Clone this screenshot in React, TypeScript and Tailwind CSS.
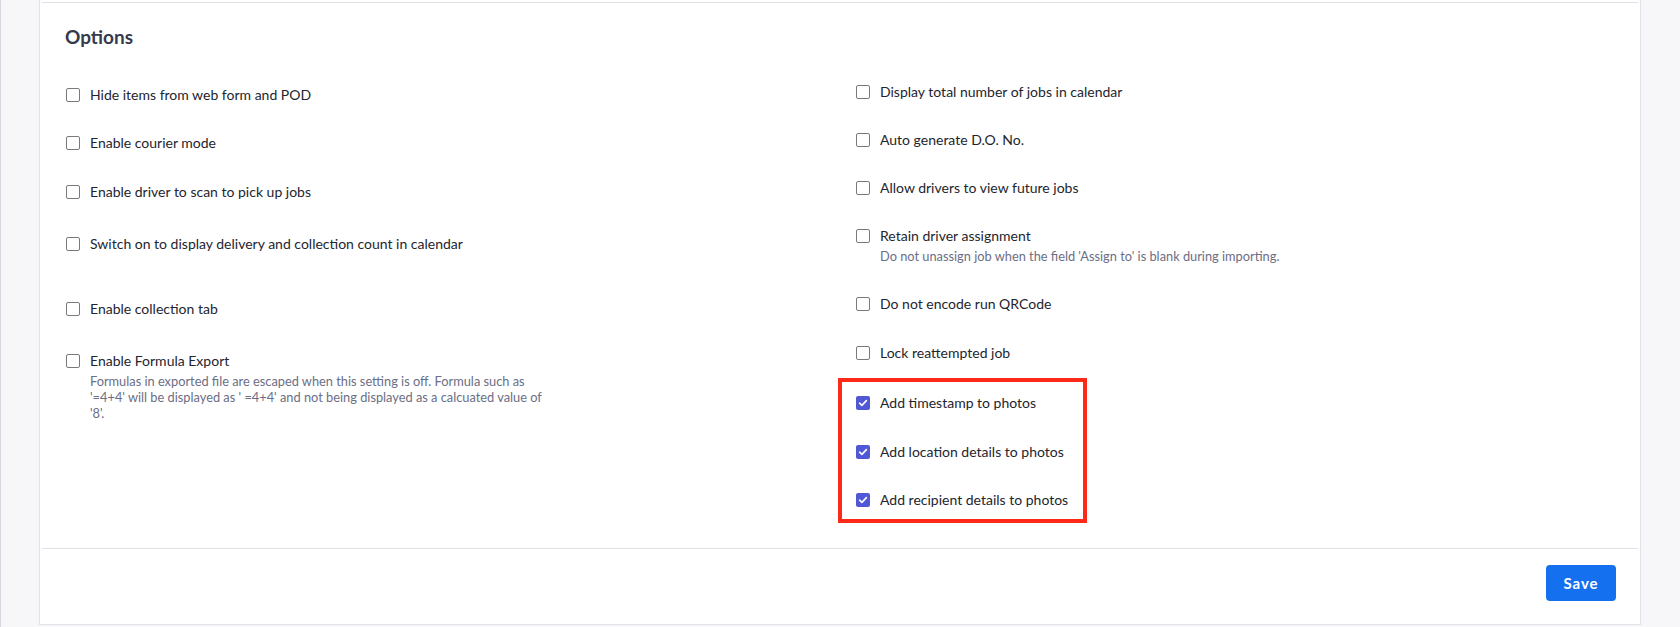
import React from "react";

const font = { fontFamily: "Lato, 'Noto Sans', sans-serif" };

function Box({ checked }: { checked?: boolean }) {
  if (checked) {
    return (
      <span className="mt-[3px] flex h-[14px] w-[14px] shrink-0 items-center justify-center rounded-[2px] bg-[#5058d6]">
        <svg width="10" height="10" viewBox="0 0 10 10" fill="none">
          <path d="M1.6 5.2 L3.9 7.4 L8.4 2.6" stroke="white" strokeWidth="1.6" strokeLinecap="round" strokeLinejoin="round" />
        </svg>
      </span>
    );
  }
  return <span className="mt-[3px] block h-[14px] w-[14px] shrink-0 rounded-[2px] border-[1.5px] border-[#7a7a7e] bg-white" />;
}

function Item({
  label,
  desc,
  checked,
  className = "",
}: {
  label: string;
  desc?: React.ReactNode;
  checked?: boolean;
  className?: string;
}) {
  return (
    <div className={"flex items-start gap-[10px] " + className}>
      <Box checked={checked} />
      <div className="flex flex-col">
        <span className="text-[14px] leading-5 text-[#23252e]">{label}</span>
        {desc && <span className="mt-[2px] text-[12.8px] leading-4 text-[#6b6e84]">{desc}</span>}
      </div>
    </div>
  );
}

export default function App() {
  return (
    <div className="flex h-[627px] w-full border-l border-[#d6d6de] bg-[#f7f7f9]" style={font}>
      <div className="ml-[38px] flex h-[625px] w-[1602px] shrink-0 flex-col border-x border-b border-[#e2e2ea] bg-white">
        <div className="h-[2px]" />
        <div className="mx-[2px] h-px bg-[#dfdfe4]" />
        <div className="h-[545px]">
          <h2 className="ml-[25px] mt-[22px] text-[19px] font-bold leading-6 text-[#363a4d]">Options</h2>
          <div className="grid grid-cols-[790px_1fr] pl-[26px]">
            <div className="flex flex-col pt-[36px]">
              <Item label="Hide items from web form and POD" />
              <Item className="mt-[28px]" label="Enable courier mode" />
              <Item className="mt-[29px]" label="Enable driver to scan to pick up jobs" />
              <Item className="mt-[32px]" label="Switch on to display delivery and collection count in calendar" />
              <Item className="mt-[45px]" label="Enable collection tab" />
              <Item
                className="mt-[32px]"
                label="Enable Formula Export"
                desc={
                  <>
                    Formulas in exported file are escaped when this setting is off. Formula such as
                    <br />
                    '=4+4' will be displayed as ' =4+4' and not being displayed as a calcuated value of
                    <br />
                    '8'.
                  </>
                }
              />
            </div>
            <div className="flex flex-col pt-[33px]">
              <Item label="Display total number of jobs in calendar" />
              <Item className="mt-[28px]" label="Auto generate D.O. No." />
              <Item className="mt-[28px]" label="Allow drivers to view future jobs" />
              <Item
                className="mt-[28px]"
                label="Retain driver assignment"
                desc="Do not unassign job when the field 'Assign to' is blank during importing."
              />
              <Item className="mt-[30px]" label="Do not encode run QRCode" />
              <Item className="mt-[29px]" label="Lock reattempted job" />
              <div className="relative mt-[30px] flex flex-col">
                <div className="pointer-events-none absolute left-[-18px] top-[-15px] h-[145px] w-[249px] border-4 border-[#fd2a19]" />
                <Item checked label="Add timestamp to photos" />
                <Item checked className="mt-[29px]" label="Add location details to photos" />
                <Item checked className="mt-[28px]" label="Add recipient details to photos" />
              </div>
            </div>
          </div>
        </div>
        <div className="mx-[2px] h-px bg-[#dfdfe4]" />
        <div className="flex flex-1 justify-end pr-6 pt-4">
          <button className="h-9 w-[70px] rounded-[4px] bg-[#1570f0] text-[15px] font-bold tracking-[0.06em] text-white">
            Save
          </button>
        </div>
      </div>
    </div>
  );
}
